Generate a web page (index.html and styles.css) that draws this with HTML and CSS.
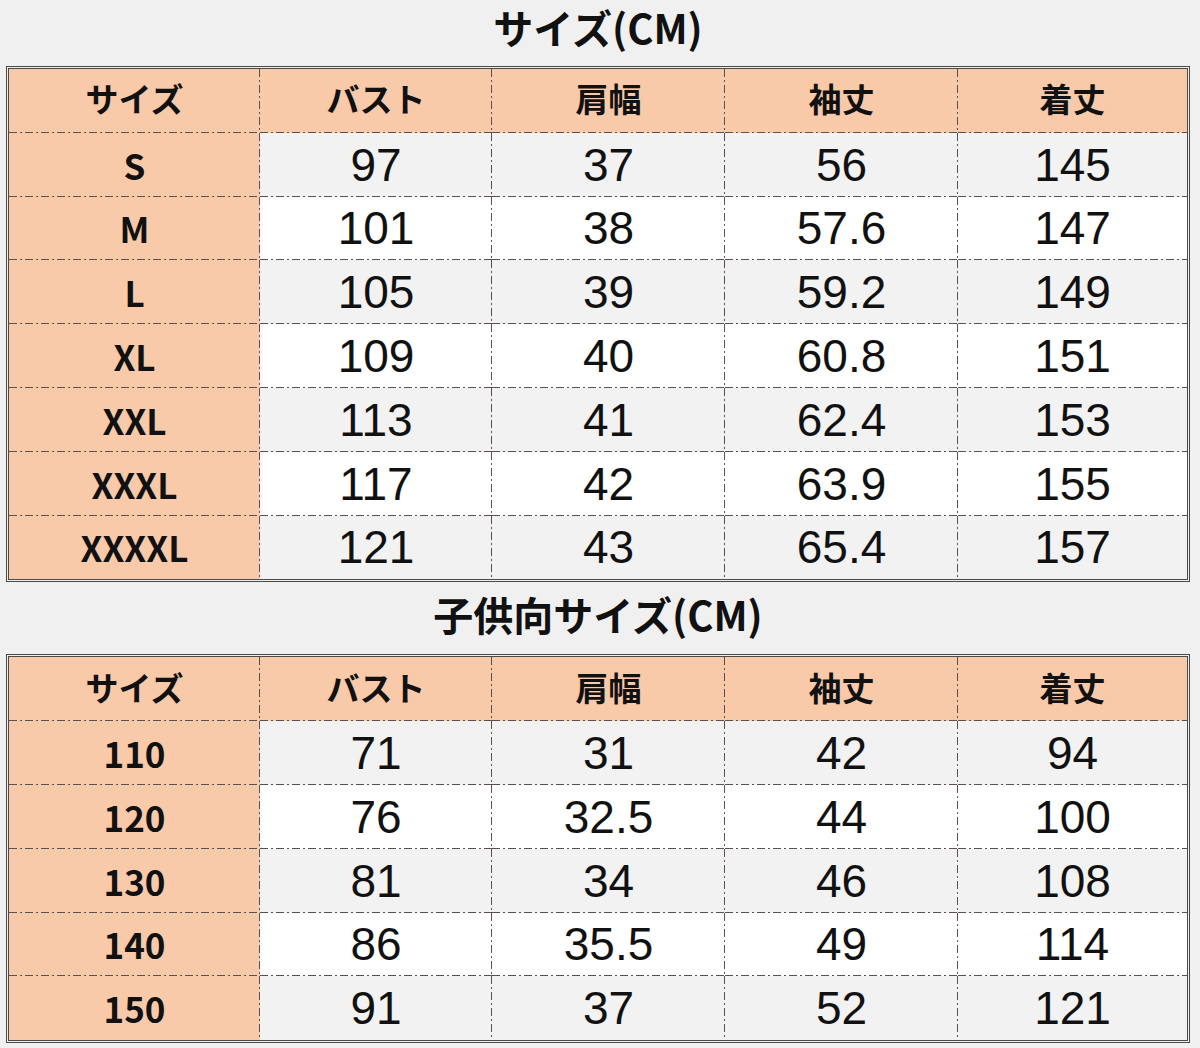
FILE: index.html
```html
<!DOCTYPE html>
<html lang="ja">
<head>
<meta charset="utf-8">
<link rel="stylesheet" href="styles.css">
</head>
<body>
<div class="page">
  <h1 class="title first">サイズ(CM)</h1>
  <table class="size-table">
    <colgroup><col class="c0"><col class="c1"><col class="c2"><col class="c3"><col class="c4"></colgroup>
    <tr class="head"><th>サイズ</th><th>バスト</th><th>肩幅</th><th>袖丈</th><th>着丈</th></tr>
    <tr class="g"><th>S</th><td>97</td><td>37</td><td>56</td><td>145</td></tr>
    <tr class="w"><th>M</th><td>101</td><td>38</td><td>57.6</td><td>147</td></tr>
    <tr class="g"><th>L</th><td>105</td><td>39</td><td>59.2</td><td>149</td></tr>
    <tr class="w"><th>XL</th><td>109</td><td>40</td><td>60.8</td><td>151</td></tr>
    <tr class="g"><th>XXL</th><td>113</td><td>41</td><td>62.4</td><td>153</td></tr>
    <tr class="w"><th>XXXL</th><td>117</td><td>42</td><td>63.9</td><td>155</td></tr>
    <tr class="g"><th>XXXXL</th><td>121</td><td>43</td><td>65.4</td><td>157</td></tr>
  </table>
  <h1 class="title second">子供向サイズ(CM)</h1>
  <table class="size-table">
    <colgroup><col class="c0"><col class="c1"><col class="c2"><col class="c3"><col class="c4"></colgroup>
    <tr class="head"><th>サイズ</th><th>バスト</th><th>肩幅</th><th>袖丈</th><th>着丈</th></tr>
    <tr class="g"><th>110</th><td>71</td><td>31</td><td>42</td><td>94</td></tr>
    <tr class="w"><th>120</th><td>76</td><td>32.5</td><td>44</td><td>100</td></tr>
    <tr class="g"><th>130</th><td>81</td><td>34</td><td>46</td><td>108</td></tr>
    <tr class="w"><th>140</th><td>86</td><td>35.5</td><td>49</td><td>114</td></tr>
    <tr class="g"><th>150</th><td>91</td><td>37</td><td>52</td><td>121</td></tr>
  </table>
</div>
</body>
</html>
```
FILE: styles.css
```css
html, body {
  margin: 0;
  padding: 0;
  background: #f0f0f0;
}
.page {
  width: 1184px;
  padding: 0 0 0 6px;
}
.title {
  margin: 0;
  text-align: center;
  font-family: "Noto Sans CJK JP", "Noto Sans", sans-serif;
  font-weight: 700;
  font-size: 40px;
  color: #111;
  line-height: 48px;
  box-sizing: border-box;
}
.title.first {
  padding-top: 3px;
  height: 66px;
}
.title.second {
  padding-top: 8px;
  height: 72px;
}
.size-table {
  width: 1184px;
  border-collapse: separate;
  border-spacing: 0;
  table-layout: fixed;
  border: 3px double #4a4a4a;
}
.c0 { width: 251px; }
.c1 { width: 232px; }
.c2 { width: 233px; }
.c3 { width: 233px; }
.c4 { width: 229px; }
.size-table tr {
  height: 63.8px;
}
.size-table th,
.size-table td {
  border: 0;
  padding: 0;
  height: 63.8px;
  box-sizing: border-box;
  text-align: center;
  vertical-align: middle;
  color: #111;
  line-height: 40px;
  background-image:
    repeating-linear-gradient(to right, #5a5050 0 8px, transparent 8px 11px, #5a5050 11px 13px, transparent 13px 16px),
    repeating-linear-gradient(to bottom, #5a5050 0 8px, transparent 8px 11px, #5a5050 11px 13px, transparent 13px 16px);
  background-size: 100% 1px, 1px 100%;
  background-position: left bottom, right top;
  background-repeat: no-repeat;
}
.size-table tr > :last-child {
  background-size: 100% 1px, 0 0;
}
.size-table tr:last-child > * {
  background-size: 0 0, 1px 100%;
}
.size-table tr:last-child > :last-child {
  background-size: 0 0, 0 0;
}
.size-table th {
  font-family: "Noto Sans CJK JP", "Noto Sans", sans-serif;
  font-weight: 700;
  font-size: 35px;
  background-color: #f8caa9;
}
.size-table tr.head th {
  font-size: 33px;
  padding-bottom: 5px;
}
.size-table td {
  font-family: "Liberation Sans", Arial, sans-serif;
  font-size: 46px;
}
.size-table tr.g td { background-color: #f2f2f2; }
.size-table tr.w td { background-color: #ffffff; }
```
